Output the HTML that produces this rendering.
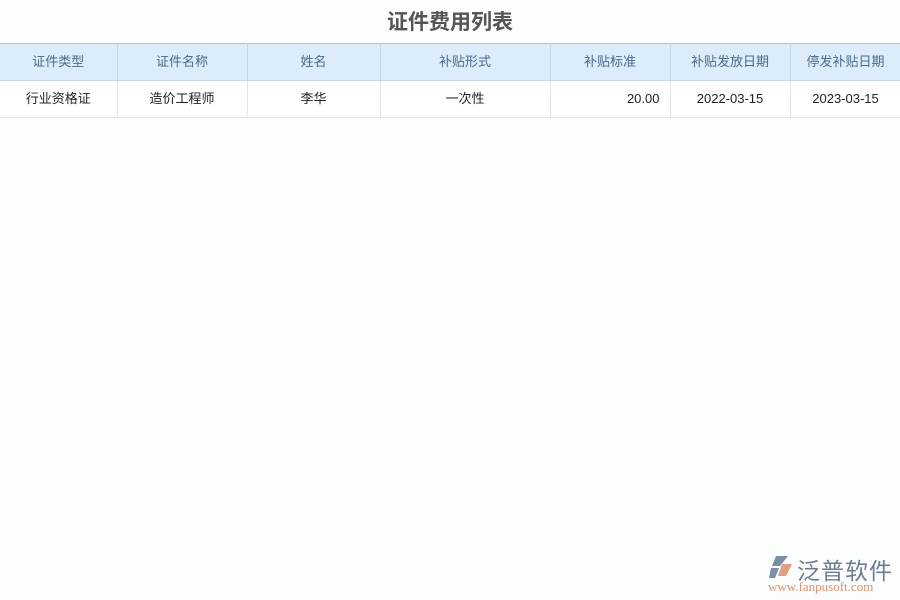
<!DOCTYPE html>
<html><head><meta charset="utf-8"><style>
body{margin:0;width:900px;height:600px;background:#fcfdfd;font-family:"Liberation Sans","Noto Sans CJK SC",sans-serif;position:relative;overflow:hidden}
h1{position:absolute;top:6px;left:0;width:900px;text-align:center;margin:0;font-size:21px;color:#555;font-weight:bold}
table{position:absolute;top:43px;left:0;border-collapse:collapse;font-size:13px;table-layout:fixed;width:901px}
th,td{padding:0;line-height:16px}
th{background:#dcecfb;color:#4a6a8a;font-weight:normal;height:36px;border-top:1px solid #a8c4dc;border-right:1px solid #c5d6e6;border-bottom:1px solid #c5d6e6;text-align:center}
td{height:36px;border-right:1px solid #e2e6ea;border-bottom:1px solid #e2e6ea;text-align:center;color:#222;background:#fff}
</style></head><body>
<h1>证件费用列表</h1>
<table>
<colgroup><col style="width:117px"><col style="width:130px"><col style="width:133px"><col style="width:170px"><col style="width:120px"><col style="width:120px"><col style="width:111px"></colgroup>
<tr><th>证件类型</th><th>证件名称</th><th>姓名</th><th>补贴形式</th><th>补贴标准</th><th>补贴发放日期</th><th>停发补贴日期</th></tr>
<tr><td>行业资格证</td><td>造价工程师</td><td>李华</td><td>一次性</td><td style="text-align:right;padding-right:10px">20.00</td><td>2022-03-15</td><td>2023-03-15</td></tr>
</table>
<svg style="position:absolute;left:768px;top:554px" width="28" height="26" viewBox="0 0 28 26">
<path d="M8 2 L20 2 L12 12 L4 12 Z" fill="#7d8ea6"/>
<path d="M3 14 L11 14 L7 24 L1 24 Z" fill="#7d8ea6"/>
<path d="M14 10 L24 10 L18 22 L10 22 Z" fill="#e0a080"/>
</svg>
<div style="position:absolute;left:797px;top:552px;font-size:23px;color:#6d7c92;letter-spacing:1px">泛普软件</div>
<div style="position:absolute;left:768px;top:579px;font-size:13px;color:#d89070;font-family:'Liberation Serif',serif">www.fanpusoft.com</div>
</body></html>
